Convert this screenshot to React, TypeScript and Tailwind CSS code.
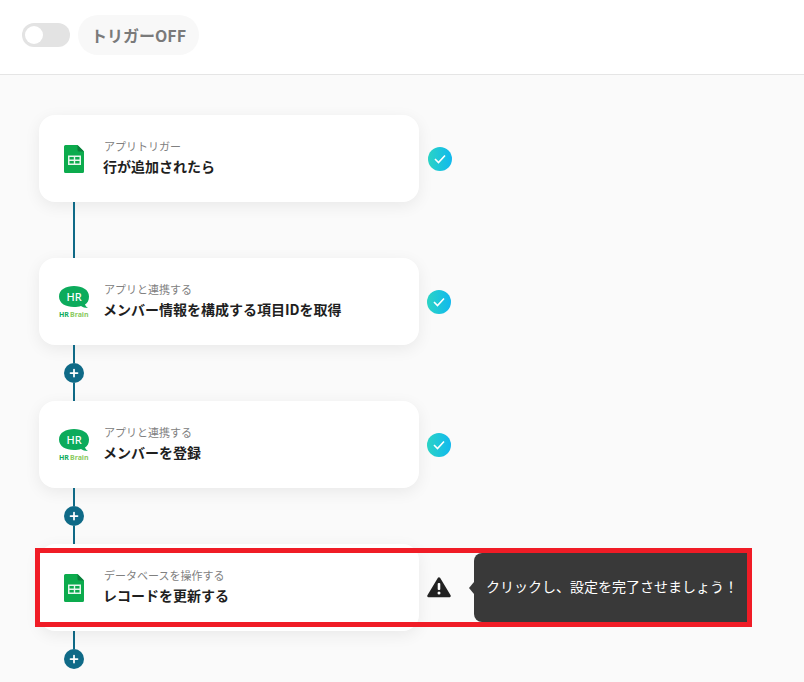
import { Plus } from 'lucide-react'

const font = { jp: "font-['Noto_Sans_CJK_JP','Noto_Sans',sans-serif]" }

function SheetIcon() {
  return (
    <svg width="20" height="28" viewBox="0 0 20 28">
      <path d="M1.500 0H13.500L20 6.500V26.500a1.500 1.500 0 0 1-1.500 1.500H1.500a1.500 1.500 0 0 1-1.500-1.500V1.500a1.500 1.500 0 0 1 1.500-1.500Z" fill="#0cab4d" />
      <path d="M13.500 0L20 6.500H15a1.500 1.500 0 0 1-1.500-1.500Z" fill="#0a7f3b" />
      <path d="M4 10.500H17V20H4ZM5.500 12V14.500H9.800V12ZM11.200 12V14.500H15.500V12ZM5.500 16V18.500H9.800V16ZM11.200 16V18.500H15.500V16Z" fill="#e6f6ec" fillRule="evenodd" />
    </svg>
  )
}

function HrBrainIcon() {
  return (
    <svg width="32" height="32" viewBox="0 0 32 32">
      <path d="M16 0C24 0 31 3.500 31 10.500C31 14.500 29.500 17 27 18.500C27.500 20 28.500 21 30 22C27 22 24.500 21 23 20C21 20.700 18.500 21 16 21C8 21 1 17.500 1 10.500C1 3.500 8 0 16 0Z" fill="#0cab5c" />
      <text x="16" y="15" textAnchor="middle" fontSize="11" fontWeight="500" fill="#fff" fontFamily="'Noto Sans',sans-serif">HR</text>
      <text x="1" y="31" fontSize="7" fontWeight="700" fill="#0cab5c" fontFamily="'Noto Sans',sans-serif">HR</text>
      <text x="12" y="31" fontSize="7" fontWeight="700" fill="#8ccb5e" fontFamily="'Noto Sans',sans-serif">Brain</text>
    </svg>
  )
}

function CheckBadge() {
  return (
    <div className="flex h-6 w-6 items-center justify-center rounded-full bg-gradient-to-r from-[#2bd3c4] to-[#12b8ee]">
      <svg width="12" height="10" viewBox="0 0 12 10" fill="none">
        <path d="M1 5L4.500 8.500L11 1.500" stroke="#fff" strokeWidth="1.600" />
      </svg>
    </div>
  )
}

function WarnBadge() {
  return (
    <svg width="24" height="21" viewBox="0 0 24 21">
      <path d="M12 1.500L22.500 19H1.500Z" fill="#222" stroke="#222" strokeWidth="2.500" strokeLinejoin="round" />
      <rect x="10.700" y="6" width="2.600" height="7" rx="1" fill="#fff" />
      <circle cx="12" cy="16" r="1.500" fill="#fff" />
    </svg>
  )
}

function StepCard({ icon, label, title }: { icon: React.ReactNode; label: string; title: string }) {
  return (
    <div className="flex h-[87px] w-[380px] items-center rounded-2xl bg-white shadow-[0_4px_16px_rgba(0,0,0,0.07)]">
      <div className="flex w-[65px] shrink-0 justify-center pr-[1px] pl-[6px]">{icon}</div>
      <div className="-ml-px flex flex-col pb-[3px]">
        <span className="ml-px text-[11px] leading-[16px] text-[#808080]">{label}</span>
        <span className="mt-[2px] text-[14px] leading-[20px] font-bold text-[#1f1f1f]">{title}</span>
      </div>
    </div>
  )
}

function Connector({ plus, last }: { plus?: boolean; last?: boolean }) {
  return (
    <div className={`ml-[25px] flex w-5 flex-col items-center ${last ? 'h-[38px]' : 'h-14'}`}>
      <div className={`w-0.5 bg-[#0f6a87] ${plus ? 'h-[18px]' : 'flex-1'}`} />
      {plus && (
        <div className="flex h-5 w-5 shrink-0 items-center justify-center rounded-full bg-[#0f6a87]">
          <Plus size={12} strokeWidth={3.500} color="#fff" />
        </div>
      )}
      {plus && !last && <div className="w-0.5 flex-1 bg-[#0f6a87]" />}
    </div>
  )
}

export default function App() {
  return (
    <div className={`h-[682px] w-[804px] overflow-hidden bg-[#fafafa] ${font.jp}`}>
      {/* ヘッダー */}
      <div className="flex h-[75px] items-center border-b border-[#e5e5e5] bg-white pb-[5px] pl-[22px]">
        <div className="flex h-6 w-12 items-center rounded-full bg-[#e3e3e3] pl-[3px]">
          <div className="h-[18px] w-[18px] rounded-full bg-white" />
        </div>
        <div className="ml-2 flex h-10 w-[121px] items-center justify-center rounded-full bg-[#f8f8f8] text-[16px] font-bold text-[#7a7a7a]">
          トリガーOFF
        </div>
      </div>

      {/* フロー */}
      <div className="flex flex-col pt-10 pl-[39px]">
        <div className="flex items-center">
          <StepCard icon={<SheetIcon />} label="アプリトリガー" title="行が追加されたら" />
          <div className="ml-[9px]"><CheckBadge /></div>
        </div>
        <Connector />
        <div className="flex items-center">
          <StepCard icon={<HrBrainIcon />} label="アプリと連携する" title="メンバー情報を構成する項目IDを取得" />
          <div className="ml-2"><CheckBadge /></div>
        </div>
        <Connector plus />
        <div className="flex items-center">
          <StepCard icon={<HrBrainIcon />} label="アプリと連携する" title="メンバーを登録" />
          <div className="ml-2"><CheckBadge /></div>
        </div>
        <Connector plus />
        <div className="relative flex items-center">
          <StepCard icon={<SheetIcon />} label="データベースを操作する" title="レコードを更新する" />
          <div className="ml-2"><WarnBadge /></div>
          {/* ツールチップ */}
          <div className="absolute top-[9px] left-[435px] flex h-[69px] w-[274px] items-center rounded-l-lg bg-[#393939] pb-[2px] pl-3 text-[14px] text-white">
            <span className="absolute top-[29px] -left-[5px] h-0 w-0 border-y-[6px] border-r-[5px] border-y-transparent border-r-[#393939]" />
            クリックし、設定を完了させましょう！
          </div>
          {/* 赤枠 */}
          <div className="absolute top-1 -left-1 h-[79px] w-[717px] border-[5px] border-[#f01c26]" />
        </div>
        <Connector plus last />
      </div>
    </div>
  )
}
